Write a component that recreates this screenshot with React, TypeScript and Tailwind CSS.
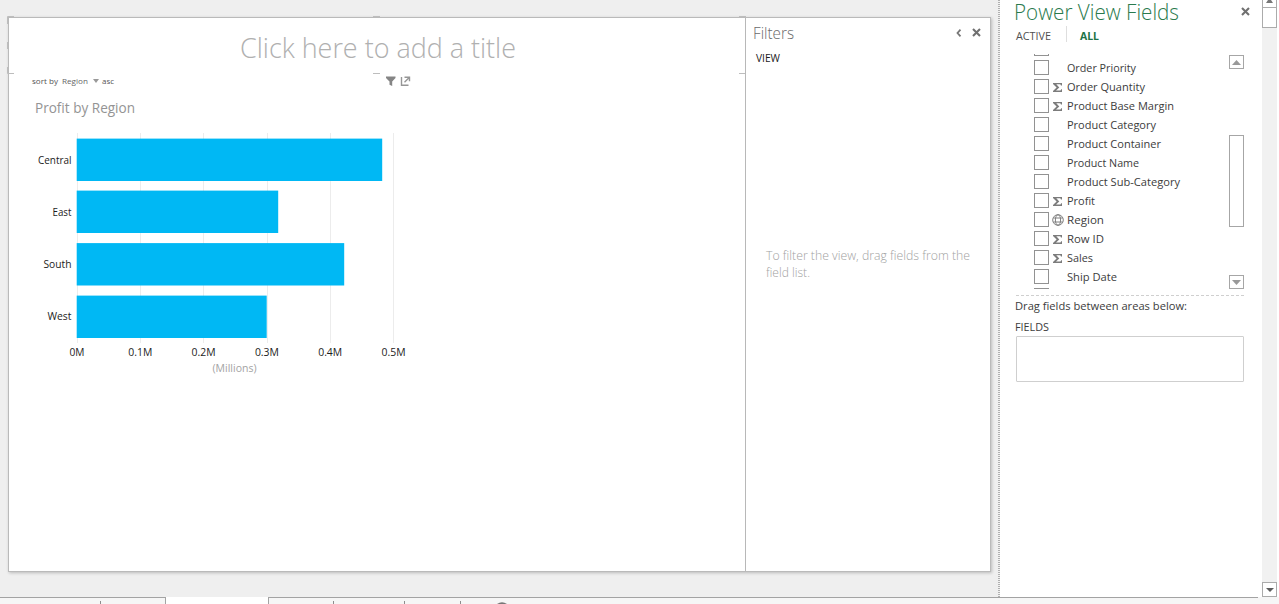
import type { ReactNode } from "react";

type FieldKind = "sum" | "geo" | "none";

const fields: { name: string; kind: FieldKind; width: number }[] = [
  { name: "Order Priority", kind: "none", width: 69 },
  { name: "Order Quantity", kind: "sum", width: 78 },
  { name: "Product Base Margin", kind: "sum", width: 107 },
  { name: "Product Category", kind: "none", width: 89 },
  { name: "Product Container", kind: "none", width: 94 },
  { name: "Product Name", kind: "none", width: 72 },
  { name: "Product Sub-Category", kind: "none", width: 113 },
  { name: "Profit", kind: "sum", width: 28 },
  { name: "Region", kind: "geo", width: 37 },
  { name: "Row ID", kind: "sum", width: 37 },
  { name: "Sales", kind: "sum", width: 26 },
  { name: "Ship Date", kind: "none", width: 50 },
];

const bars = [
  { label: "Central", width: 305.5, y: 6, labelY: 31, labelWidth: 33.5 },
  { label: "East", width: 201.5, y: 58, labelY: 83, labelWidth: 19 },
  { label: "South", width: 267.5, y: 110.5, labelY: 135, labelWidth: 28 },
  { label: "West", width: 190, y: 163, labelY: 187, labelWidth: 24 },
];

const ticks = ["0M", "0.1M", "0.2M", "0.3M", "0.4M", "0.5M"];

/* One line of text set to an exact measure. */
function Line({
  children,
  width,
  height,
  size,
  baseline,
  fill,
  weight = 400,
}: {
  children: string;
  width: number;
  height: number;
  size: number;
  baseline: number;
  fill: string;
  weight?: number;
}) {
  return (
    <svg width={width + 4} height={height} className="block shrink-0 overflow-visible">
      <text
        x="0"
        y={baseline}
        fontSize={size}
        fontWeight={weight}
        fill={fill}
        textLength={width}
        lengthAdjust="spacingAndGlyphs"
      >
        {children}
      </text>
    </svg>
  );
}

function SigmaIcon() {
  return (
    <svg width="10" height="9" viewBox="0 0 10 9" className="block">
      <path d="M0 0h9v2.600H8L7.300 1.300H3.300L6.300 4.400 3 7.500h4.500L8.200 6.200H9V9H0V8L3.600 4.500 0 1z" fill="#7c7c7c" />
    </svg>
  );
}

function GlobeIcon() {
  return (
    <svg width="12" height="12" viewBox="0 0 12 12" className="block" fill="none" stroke="#808080">
      <circle cx="6" cy="6" r="5.3" />
      <ellipse cx="6" cy="6" rx="2.6" ry="5.3" />
      <path d="M1.3 4h9.4M1.3 8h9.4" />
    </svg>
  );
}

function Close({ size }: { size: number }) {
  return (
    <svg width={size} height={size} viewBox="0 0 9 9" className="block">
      <path d="M1 1l7 7M8 1L1 8" stroke="#707070" strokeWidth="2.1" />
    </svg>
  );
}

function Arrow({ up = false, fill = "#999" }: { up?: boolean; fill?: string }) {
  return (
    <svg width="9" height="5" viewBox="0 0 9 5" className="block">
      <path d={up ? "M0 5L4.5 0 9 5z" : "M0 0h9L4.5 5z"} fill={fill} />
    </svg>
  );
}

function Checkbox() {
  return <div className="h-[15px] w-[15px] shrink-0 border border-[#929292] bg-white" />;
}

function FieldRow({ icon, children }: { icon: ReactNode; children?: ReactNode }) {
  return (
    <div className="flex h-[19px] shrink-0 items-start pt-[2px]">
      <Checkbox />
      <div className="flex h-[16px] w-[18px] items-center justify-center">{icon}</div>
      {children}
    </div>
  );
}

function ProfitChart() {
  return (
    <svg width="400" height="260" className="block">
      {ticks.map((t, i) => (
        <g key={t}>
          <line x1={68.5 + Math.round(i * 63.2)} x2={68.5 + Math.round(i * 63.2)} y1="0" y2="210" stroke="#ececec" />
          <text
            x={68 + i * 63.3}
            y="223"
            fontSize="11.2"
            fill="#1c1c1c"
            textAnchor="middle"
            textLength={i === 0 ? 15 : 24}
            lengthAdjust="spacingAndGlyphs"
          >
            {t}
          </text>
        </g>
      ))}
      {bars.map((b) => (
        <g key={b.label}>
          <rect x="67.7" y={b.y - 0.4} width={b.width} height="42.4" fill="#00b8f4" />
          <text
            x={62.5 - b.labelWidth}
            y={b.labelY}
            fontSize="11.5"
            fill="#1c1c1c"
            textLength={b.labelWidth}
            lengthAdjust="spacingAndGlyphs"
          >
            {b.label}
          </text>
        </g>
      ))}
      <text x="203.5" y="239" fontSize="11" fill="#a3a3a3" textLength="44" lengthAdjust="spacingAndGlyphs">
        (Millions)
      </text>
    </svg>
  );
}

function TitleHandles() {
  return (
    <svg
      width="740"
      height="60"
      className="pointer-events-none absolute -top-[2px] -left-[2px]"
      fill="none"
      stroke="#bdbdbd"
    >
      <path d="M.5 8V.5H7M.5 26v7M.5 51v6.500H7" />
      <path d="M366 .5h7M366 57.500h7M732 .5h7M732 57.500h6" />
    </svg>
  );
}

function Canvas() {
  return (
    <div className="flex w-[737px] shrink-0 flex-col border-r border-[#b8b8b8]">
      <div className="relative flex h-[55px] shrink-0 pl-[231px]">
        <TitleHandles />
        <Line width={276} height={55} size={28} baseline={40} fill="#b0b0b0" weight={300}>
          Click here to add a title
        </Line>
      </div>
      <div className="flex h-[16px] items-center pl-[23px]">
        <Line width={26} height={16} size={8} baseline={11} fill="#555">sort by</Line>
        <Line width={26} height={16} size={8} baseline={11} fill="#666">Region</Line>
        <svg width="6" height="4" className="ml-px block">
          <path d="M0 0h6L3 4z" fill="#999" />
        </svg>
        <div className="ml-[3px]">
          <Line width={12} height={16} size={8} baseline={11} fill="#555">asc</Line>
        </div>
        <svg width="26" height="11" viewBox="0 0 26 11" className="ml-[268px] block">
          <path d="M0 .5h9.500v1.500L6.200 5.500V10L3.500 8.700V5.500L0 2z" fill="#858585" />
          <path d="M15.500 1v8.300H22.500M18.500 1.300h5v4M23.500 1.300L18.500 6.200" fill="none" stroke="#969696" strokeWidth="1.400" />
        </svg>
      </div>
      <div className="flex h-[44px] pl-[26px]">
        <Line width={100} height={44} size={13.8} baseline={24} fill="#949494">Profit by Region</Line>
      </div>
      <ProfitChart />
    </div>
  );
}

function Filters() {
  return (
    <div className="flex flex-1 flex-col">
      <div className="flex h-[30px] pr-[9px] pl-[7px]">
        <Line width={41} height={30} size={16} baseline={21} fill="#6a6a6a" weight={300}>Filters</Line>
        <div className="mt-[10px] ml-auto flex h-[9px] items-center gap-[10px]">
          <svg width="6" height="8" viewBox="0 0 6 8" className="block">
            <path d="M4.500 .6L1.500 4l3 3.400" fill="none" stroke="#777" strokeWidth="1.800" />
          </svg>
          <Close size={9} />
        </div>
      </div>
      <div className="flex h-[200px] pl-[10px]">
        <Line width={24} height={20} size={10.8} baseline={14} fill="#1c1c1c">VIEW</Line>
      </div>
      <div className="flex flex-col pl-[20px]">
        <Line width={204} height={17} size={12.5} baseline={12} fill="#a2a2a2" weight={300}>
          To filter the view, drag fields from the
        </Line>
        <Line width={44} height={17} size={12.5} baseline={12} fill="#a2a2a2" weight={300}>field list.</Line>
      </div>
    </div>
  );
}

function ListScrollbar() {
  return (
    <div className="flex w-[15px] flex-col pt-px">
      <div className="flex h-[14px] items-center justify-center border border-[#a6a6a6]">
        <Arrow up />
      </div>
      <div className="mt-[66px] h-[92px] border border-[#a6a6a6]" />
      <div className="mt-auto flex h-[14px] items-center justify-center border border-[#a6a6a6]">
        <Arrow />
      </div>
    </div>
  );
}

function FieldsPane() {
  return (
    <div className="flex w-[262px] flex-col bg-white">
      <div className="flex h-[26px] pr-[12px] pl-[14px]">
        <Line width={165} height={26} size={21.5} baseline={20} fill="#2a7a4d" weight={300}>
          Power View Fields
        </Line>
        <div className="mt-[7px] ml-auto">
          <Close size={9} />
        </div>
      </div>
      <div className="flex h-[28px] pl-[16px]">
        <Line width={35} height={20} size={11} baseline={14} fill="#505050">ACTIVE</Line>
        <div className="mr-[13px] ml-[11px] h-[16px] w-px bg-[#dedede]" />
        <Line width={19} height={20} size={11} baseline={14} fill="#217346" weight={700}>ALL</Line>
      </div>
      <div className="flex h-[235px] pr-[18px] pl-[34px]">
        <div className="h-full flex-1 overflow-hidden">
          <div className="-mt-[15px] flex flex-col">
            <FieldRow icon={null} />
            {fields.map((f) => (
              <FieldRow
                key={f.name}
                icon={f.kind === "sum" ? <SigmaIcon /> : f.kind === "geo" ? <GlobeIcon /> : null}
              >
                <Line width={f.width} height={16} size={11.5} baseline={12} fill="#3c3c3c" weight={500}>
                  {f.name}
                </Line>
              </FieldRow>
            ))}
            <FieldRow icon={null} />
          </div>
        </div>
        <ListScrollbar />
      </div>
      <div className="mt-[6px] mr-[18px] ml-[16px] h-px bg-[repeating-linear-gradient(to_right,#cfcfcf_0_3px,#ffffff_3px_5px)]" />
      <div className="flex h-[22px] pl-[15px]">
        <Line width={172} height={22} size={11.5} baseline={14} fill="#3c3c3c" weight={500}>
          Drag fields between areas below:
        </Line>
      </div>
      <div className="flex h-[18px] pl-[15px]">
        <Line width={34} height={18} size={11} baseline={13} fill="#3c3c3c">FIELDS</Line>
      </div>
      <div className="mr-[18px] ml-[16px] h-[46px] rounded-[1px] border border-[#cfcfcf]" />
    </div>
  );
}

function PageScrollbar() {
  return (
    <div className="flex w-[15px] flex-col bg-[#f1f1f1]">
      <div className="flex h-[7px] items-start justify-center border-x border-[#ababab] bg-white pt-0">
        <svg width="7" height="3" className="block">
          <path d="M2 0h3l2 3H0z" fill="#777" />
        </svg>
      </div>
      <div className="h-[21px] border border-[#ababab] bg-white" />
      <div className="mt-auto flex h-[15px] items-center justify-center border border-[#ababab] bg-white">
        <svg width="8" height="4" className="block">
          <path d="M0 0h8L4 4z" fill="#5c5c5c" />
        </svg>
      </div>
    </div>
  );
}

function SheetTabs() {
  return (
    <div className="flex h-[7px] items-start">
      <div className="flex h-[7px] w-[166px] items-end border-t border-r border-[#a3a3a3] bg-[#f6f6f6]">
        <div className="ml-[100px] h-[3px] w-px bg-[#8d8d8d]" />
      </div>
      <div className="h-[7px] w-[102px] bg-white" />
      <div className="flex h-[7px] w-[990px] items-end border-t border-l border-[#a3a3a3] bg-[#f6f6f6]">
        <div className="ml-[64px] h-[3px] w-px bg-[#8d8d8d]" />
        <div className="ml-[70px] h-[3px] w-px bg-[#8d8d8d]" />
        <div className="ml-[55px] h-[3px] w-px bg-[#8d8d8d]" />
        <svg width="10" height="2" className="ml-[36px] block">
          <path d="M0 2Q5 -1.500 10 2z" fill="#777" />
        </svg>
      </div>
      <div className="h-[7px] flex-1 bg-[#f6f6f6]" />
    </div>
  );
}

export default function App() {
  return (
    <div className="flex h-[604px] w-[1279px] flex-col overflow-hidden bg-white font-['Open_Sans','Noto_Sans',sans-serif]">
      <div className="flex h-[597px]">
        <div className="w-[998px] bg-[#efefef] pt-[17px] pl-[8px]">
          <div className="flex h-[555px] w-[983px] border border-[#bababa] bg-white shadow-[1px_1px_3px_rgba(0,0,0,0.22)]">
            <Canvas />
            <Filters />
          </div>
        </div>
        <div className="w-[2px] bg-[repeating-linear-gradient(to_bottom,#b0b0b0_0_1px,#f2f2f2_1px_2px)]" />
        <FieldsPane />
        <PageScrollbar />
      </div>
      <SheetTabs />
    </div>
  );
}
